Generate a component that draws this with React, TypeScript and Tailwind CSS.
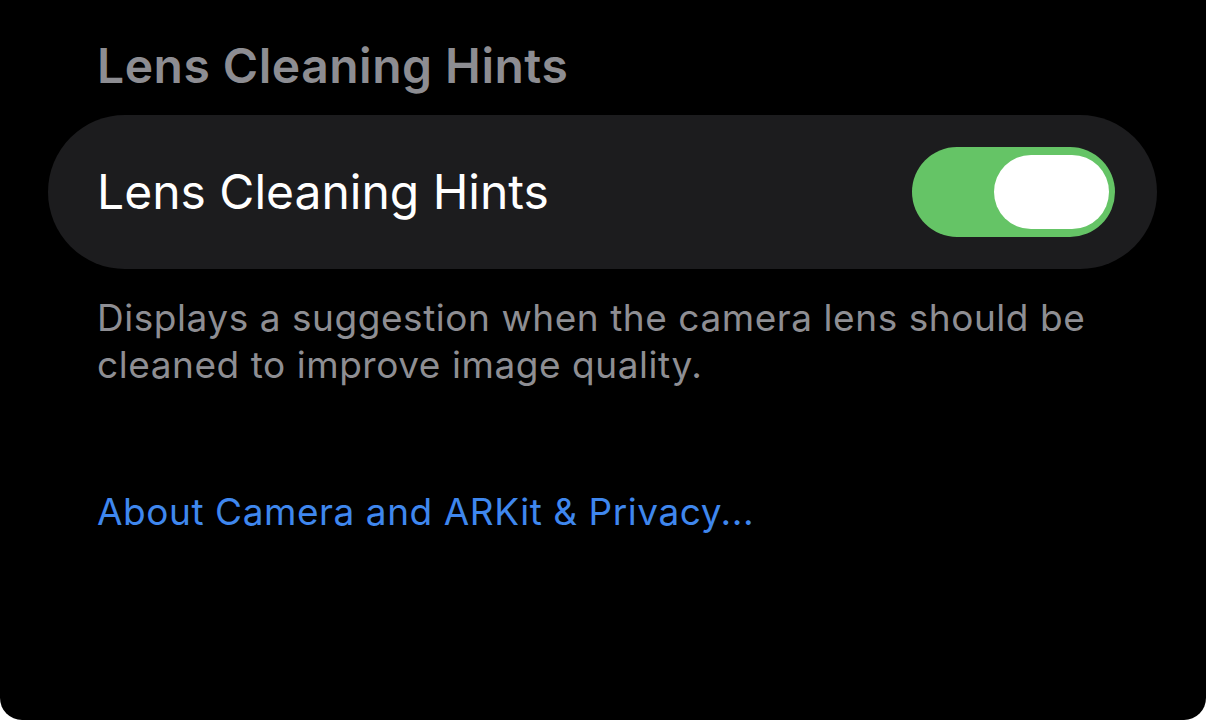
import React from "react";

export default function App() {
  return (
    <div className="w-[1206px] h-[720px] bg-white overflow-hidden">
      <div
        className="w-full h-full bg-black rounded-b-[22px] flex flex-col"
        style={{ fontFamily: "Inter, 'Noto Sans', sans-serif" }}
      >
        <div className="mt-[38px] pl-[97px] h-[56px] leading-[56px] text-[48px] font-semibold text-[#8d8d92] tracking-[0.5px]">
          Lens Cleaning Hints
        </div>
        <div className="mt-[21px] ml-[48px] w-[1109px] h-[154px] rounded-full bg-[#1c1c1e] flex items-center justify-between pl-[49px] pr-[42px]">
          <span className="text-[48px] text-white leading-none">Lens Cleaning Hints</span>
          <div className="w-[203px] h-[90px] rounded-full bg-[#65c466] flex items-center justify-end pr-[6px]">
            <div className="w-[115px] h-[74px] rounded-full bg-white" />
          </div>
        </div>
        <p className="mt-[25px] pl-[97px] pr-[80px] text-[37px] leading-[47px] tracking-[0.55px] text-[#8e8e93]">
          Displays a suggestion when the camera lens should be cleaned to improve image quality.
        </p>
        <div className="mt-[100px] pl-[97px] text-[37px] leading-[47px] tracking-[0.55px] text-[#3f87ee]">
          About Camera and ARKit &amp; Privacy...
        </div>
      </div>
    </div>
  );
}
